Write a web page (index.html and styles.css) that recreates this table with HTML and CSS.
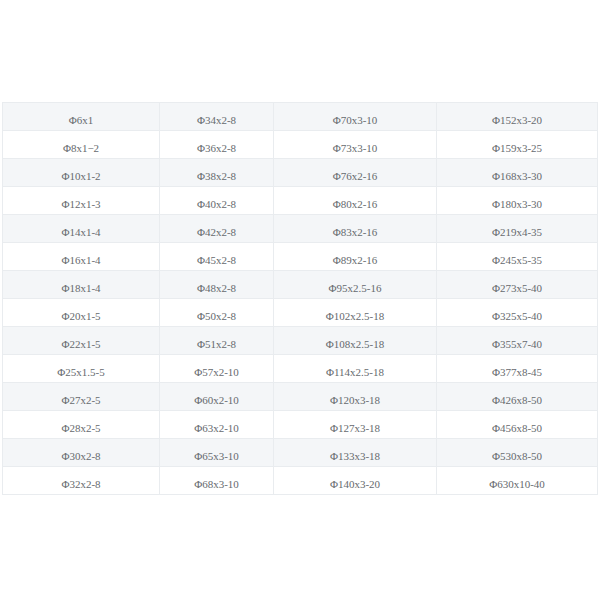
FILE: index.html
```html
<!DOCTYPE html>
<html>
<head>
<meta charset="utf-8">
<link rel="stylesheet" href="styles.css">
</head>
<body>
<div class="wrap">
<table class="spec">
<colgroup><col class="c1"><col class="c2"><col class="c3"><col class="c4"></colgroup>
<tbody>
<tr><td>Φ6x1</td><td>Φ34x2-8</td><td>Φ70x3-10</td><td>Φ152x3-20</td></tr>
<tr><td>Φ8x1−2</td><td>Φ36x2-8</td><td>Φ73x3-10</td><td>Φ159x3-25</td></tr>
<tr><td>Φ10x1-2</td><td>Φ38x2-8</td><td>Φ76x2-16</td><td>Φ168x3-30</td></tr>
<tr><td>Φ12x1-3</td><td>Φ40x2-8</td><td>Φ80x2-16</td><td>Φ180x3-30</td></tr>
<tr><td>Φ14x1-4</td><td>Φ42x2-8</td><td>Φ83x2-16</td><td>Φ219x4-35</td></tr>
<tr><td>Φ16x1-4</td><td>Φ45x2-8</td><td>Φ89x2-16</td><td>Φ245x5-35</td></tr>
<tr><td>Φ18x1-4</td><td>Φ48x2-8</td><td>Φ95x2.5-16</td><td>Φ273x5-40</td></tr>
<tr><td>Φ20x1-5</td><td>Φ50x2-8</td><td>Φ102x2.5-18</td><td>Φ325x5-40</td></tr>
<tr><td>Φ22x1-5</td><td>Φ51x2-8</td><td>Φ108x2.5-18</td><td>Φ355x7-40</td></tr>
<tr><td>Φ25x1.5-5</td><td>Φ57x2-10</td><td>Φ114x2.5-18</td><td>Φ377x8-45</td></tr>
<tr><td>Φ27x2-5</td><td>Φ60x2-10</td><td>Φ120x3-18</td><td>Φ426x8-50</td></tr>
<tr><td>Φ28x2-5</td><td>Φ63x2-10</td><td>Φ127x3-18</td><td>Φ456x8-50</td></tr>
<tr><td>Φ30x2-8</td><td>Φ65x3-10</td><td>Φ133x3-18</td><td>Φ530x8-50</td></tr>
<tr><td>Φ32x2-8</td><td>Φ68x3-10</td><td>Φ140x3-20</td><td>Φ630x10-40</td></tr>
</tbody>
</table>
</div>
</body>
</html>
```
FILE: styles.css
```css
html, body {
  margin: 0;
  padding: 0;
  background: #ffffff;
}
.wrap {
  padding: 102px 3px 0 2px;
}
.spec {
  width: 595px;
  border-collapse: collapse;
  table-layout: fixed;
  font-family: "Liberation Serif", serif;
  font-size: 11px;
  color: #666a6e;
}
.c1 { width: 157px; }
.c2 { width: 114px; }
.c3 { width: 163px; }
.c4 { width: 161px; }
.spec td {
  height: 28px;
  padding: 6px 0 0 0;
  box-sizing: border-box;
  text-align: center;
  vertical-align: middle;
  border: 1px solid #e9ecef;
  line-height: 14px;
}
.spec tr:nth-child(odd) td {
  background: #f4f6f8;
}
.spec tr:nth-child(even) td {
  background: #ffffff;
}
```
